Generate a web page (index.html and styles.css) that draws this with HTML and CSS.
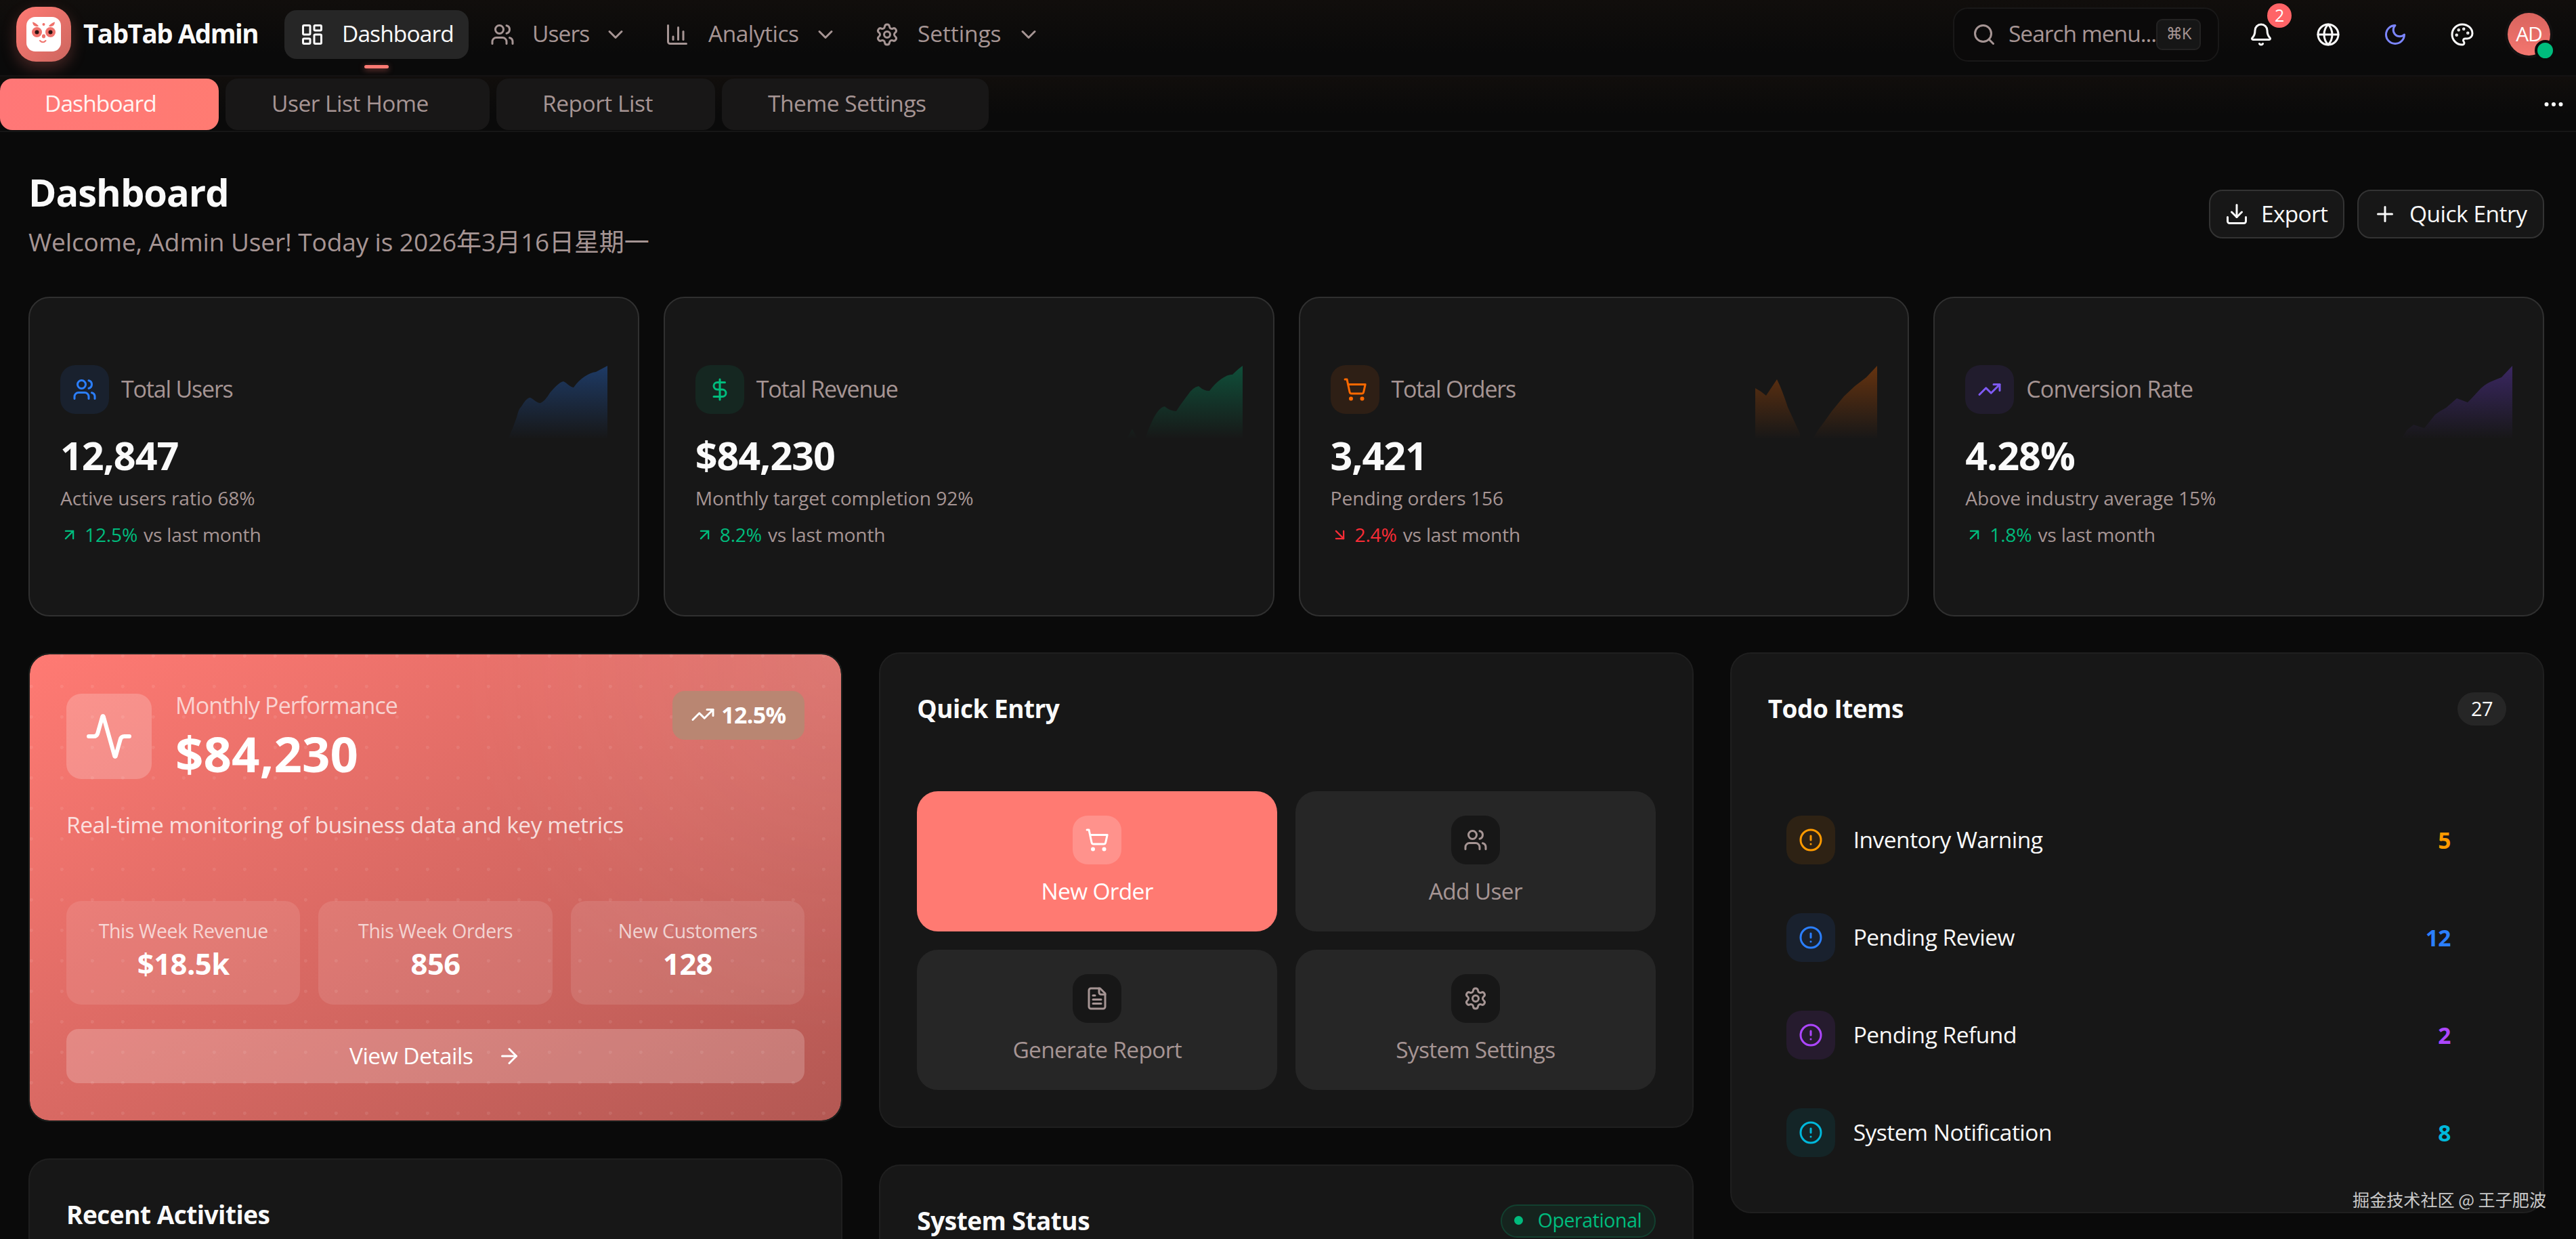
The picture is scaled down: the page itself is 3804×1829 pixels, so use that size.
FILE: index.html
```html
<!DOCTYPE html>
<html lang="en">
<head>
<meta charset="utf-8">
<title>TabTab Admin</title>
<link rel="stylesheet" href="styles.css">
</head>
<body>
<svg class="sprite" aria-hidden="true">
  <symbol id="i-dashboard" viewBox="0 0 24 24"><rect width="7" height="9" x="3" y="3" rx="1"/><rect width="7" height="5" x="14" y="3" rx="1"/><rect width="7" height="9" x="14" y="12" rx="1"/><rect width="7" height="5" x="3" y="16" rx="1"/></symbol>
  <symbol id="i-users" viewBox="0 0 24 24"><path d="M16 21v-2a4 4 0 0 0-4-4H6a4 4 0 0 0-4 4v2"/><path d="M16 3.128a4 4 0 0 1 0 7.744"/><path d="M22 21v-2a4 4 0 0 0-3-3.87"/><circle cx="9" cy="7" r="4"/></symbol>
  <symbol id="i-chart" viewBox="0 0 24 24"><path d="M3 3v16a2 2 0 0 0 2 2h16"/><path d="M18 17V9"/><path d="M13 17V5"/><path d="M8 17v-3"/></symbol>
  <symbol id="i-settings" viewBox="0 0 24 24"><path d="M9.671 4.136a2.34 2.34 0 0 1 4.659 0 2.34 2.34 0 0 0 3.319 1.915 2.34 2.34 0 0 1 2.33 4.033 2.34 2.34 0 0 0 0 3.831 2.34 2.34 0 0 1-2.33 4.033 2.34 2.34 0 0 0-3.319 1.915 2.34 2.34 0 0 1-4.659 0 2.34 2.34 0 0 0-3.32-1.915 2.34 2.34 0 0 1-2.33-4.033 2.34 2.34 0 0 0 0-3.831A2.34 2.34 0 0 1 6.35 6.051a2.34 2.34 0 0 0 3.319-1.915"/><circle cx="12" cy="12" r="3"/></symbol>
  <symbol id="i-chevron" viewBox="0 0 24 24"><path d="m6 9 6 6 6-6"/></symbol>
  <symbol id="i-search" viewBox="0 0 24 24"><path d="m21 21-4.34-4.34"/><circle cx="11" cy="11" r="8"/></symbol>
  <symbol id="i-bell" viewBox="0 0 24 24"><path d="M10.268 21a2 2 0 0 0 3.464 0"/><path d="M3.262 15.326A1 1 0 0 0 4 17h16a1 1 0 0 0 .74-1.673C19.41 13.956 18 12.499 18 8A6 6 0 0 0 6 8c0 4.499-1.411 5.956-2.738 7.326"/></symbol>
  <symbol id="i-globe" viewBox="0 0 24 24"><circle cx="12" cy="12" r="10"/><path d="M12 2a14.5 14.5 0 0 0 0 20 14.5 14.5 0 0 0 0-20"/><path d="M2 12h20"/></symbol>
  <symbol id="i-moon" viewBox="0 0 24 24"><path d="M12 3a6 6 0 0 0 9 9 9 9 0 1 1-9-9Z"/></symbol>
  <symbol id="i-palette" viewBox="0 0 24 24"><path d="M12 22a1 1 0 0 1 0-20 10 9 0 0 1 10 9 5 5 0 0 1-5 5h-2.250a1.750 1.750 0 0 0-1.400 2.800l.3.400a1.750 1.750 0 0 1-1.400 2.800z"/><circle class="dot" cx="13.500" cy="6.500" r=".5"/><circle class="dot" cx="17.500" cy="10.500" r=".5"/><circle class="dot" cx="6.500" cy="12.500" r=".5"/><circle class="dot" cx="8.500" cy="7.500" r=".5"/></symbol>
  <symbol id="i-more" viewBox="0 0 24 24"><circle cx="12" cy="12" r="1"/><circle cx="19" cy="12" r="1"/><circle cx="5" cy="12" r="1"/></symbol>
  <symbol id="i-download" viewBox="0 0 24 24"><path d="M12 15V3"/><path d="M21 15v4a2 2 0 0 1-2 2H5a2 2 0 0 1-2-2v-4"/><path d="m7 10 5 5 5-5"/></symbol>
  <symbol id="i-plus" viewBox="0 0 24 24"><path d="M5 12h14"/><path d="M12 5v14"/></symbol>
  <symbol id="i-dollar" viewBox="0 0 24 24"><path d="M12 2v20"/><path d="M17 5H9.500a3.500 3.500 0 0 0 0 7h5a3.500 3.500 0 0 1 0 7H6"/></symbol>
  <symbol id="i-cart" viewBox="0 0 24 24"><circle cx="8" cy="21" r="1"/><circle cx="19" cy="21" r="1"/><path d="M2.050 2.050h2l2.660 12.420a2 2 0 0 0 2 1.580h9.780a2 2 0 0 0 1.950-1.570l1.650-7.430H5.120"/></symbol>
  <symbol id="i-trend" viewBox="0 0 24 24"><path d="M16 7h6v6"/><path d="m22 7-8.500 8.500-5-5L2 17"/></symbol>
  <symbol id="i-up" viewBox="0 0 24 24"><path d="M7 7h10v10"/><path d="M7 17 17 7"/></symbol>
  <symbol id="i-down" viewBox="0 0 24 24"><path d="m7 7 10 10"/><path d="M17 7v10H7"/></symbol>
  <symbol id="i-activity" viewBox="0 0 24 24"><path d="M22 12h-2.480a2 2 0 0 0-1.930 1.460l-2.350 8.360a.25.25 0 0 1-.48 0L9.240 2.180a.25.25 0 0 0-.48 0l-2.350 8.360A2 2 0 0 1 4.490 12H2"/></symbol>
  <symbol id="i-arrow" viewBox="0 0 24 24"><path d="M5 12h14"/><path d="m12 5 7 7-7 7"/></symbol>
  <symbol id="i-file" viewBox="0 0 24 24"><path d="M15 2H6a2 2 0 0 0-2 2v16a2 2 0 0 0 2 2h12a2 2 0 0 0 2-2V7Z"/><path d="M14 2v4a2 2 0 0 0 2 2h4"/><path d="M10 9H8"/><path d="M16 13H8"/><path d="M16 17H8"/></symbol>
  <symbol id="i-alert" viewBox="0 0 24 24"><circle cx="12" cy="12" r="10"/><path d="M12 8v4"/><path d="M12 16h.01"/></symbol>
</svg>

<header class="topbar">
  <div class="brand">
    <div class="logo">
      <svg class="logo-face" viewBox="0 0 51 51">
        <rect width="51" height="51" rx="13" fill="#fff"/>
        <g fill="#ef726c">
          <path d="M9 7.500C11 8 15 9.500 18 13.500c-1.500 1.500-6 .5-7.500-1.500C9.500 10.500 9.200 9 9 7.500z"/>
          <path d="M42 7.500C40 8 36 9.500 33 13.500c1.500 1.500 6 .5 7.500-1.500 1-1.500 1.300-3 1.500-4.500z"/>
          <circle cx="25.500" cy="11" r="2"/>
          <circle cx="15.500" cy="22.500" r="7.500"/><circle cx="35.500" cy="22.500" r="7.500"/>
          <ellipse cx="25.500" cy="28.500" rx="2.600" ry="3"/>
        </g>
        <circle cx="15.500" cy="22.500" r="3" fill="#2a1512"/><circle cx="35.500" cy="22.500" r="3" fill="#2a1512"/>
        <path d="M20 35q4.500 4.500 8.500 0" fill="none" stroke="#ef726c" stroke-width="2" stroke-linecap="round"/>
      </svg>
    </div>
    <span class="brand-name">TabTab Admin</span>
  </div>
  <nav class="nav">
    <a class="nav-item nav-dashboard active"><svg class="icon"><use href="#i-dashboard"/></svg><span>Dashboard</span></a>
    <a class="nav-item nav-users"><svg class="icon"><use href="#i-users"/></svg><span>Users</span><svg class="icon chev"><use href="#i-chevron"/></svg></a>
    <a class="nav-item nav-analytics"><svg class="icon"><use href="#i-chart"/></svg><span>Analytics</span><svg class="icon chev"><use href="#i-chevron"/></svg></a>
    <a class="nav-item nav-settings"><svg class="icon"><use href="#i-settings"/></svg><span>Settings</span><svg class="icon chev"><use href="#i-chevron"/></svg></a>
  </nav>
  <div class="tools">
    <div class="search"><svg class="icon"><use href="#i-search"/></svg><span class="search-text">Search menu...</span><kbd class="kbd">⌘K</kbd></div>
    <button class="tool"><svg class="icon"><use href="#i-bell"/></svg><span class="count">2</span></button>
    <button class="tool"><svg class="icon"><use href="#i-globe"/></svg></button>
    <button class="tool moon"><svg class="icon"><use href="#i-moon"/></svg></button>
    <button class="tool"><svg class="icon"><use href="#i-palette"/></svg></button>
    <button class="tool"><span class="avatar">AD</span><span class="presence"></span></button>
  </div>
</header>

<div class="tabs">
  <a class="tab tab-1 active">Dashboard</a>
  <a class="tab tab-2">User List Home</a>
  <a class="tab tab-3">Report List</a>
  <a class="tab tab-4">Theme Settings</a>
  <button class="tabs-more"><svg class="icon"><use href="#i-more"/></svg></button>
</div>

<main class="page">
  <div class="page-head">
    <div>
      <h1 class="page-title">Dashboard</h1>
      <p class="page-sub">Welcome, Admin User! Today is 2026年3月16日星期一</p>
    </div>
    <div class="page-actions">
      <button class="btn btn-export"><svg class="icon"><use href="#i-download"/></svg><span>Export</span></button>
      <button class="btn btn-quick"><svg class="icon"><use href="#i-plus"/></svg><span>Quick Entry</span></button>
    </div>
  </div>

  <section class="stats">
    <article class="stat">
      <div>
        <div class="stat-head"><span class="chip blue"><svg class="icon"><use href="#i-users"/></svg></span><span class="stat-title">Total Users</span></div>
        <div class="stat-value">12,847</div>
        <div class="stat-desc">Active users ratio 68%</div>
        <div class="stat-trend"><svg class="icon small up"><use href="#i-up"/></svg><span class="up">12.5%</span><span>vs last month</span></div>
      </div>
      <svg class="spark" viewBox="0 0 180 108">
        <defs><linearGradient id="g1" x1="0" y1="0" x2="0" y2="108" gradientUnits="userSpaceOnUse"><stop offset="0" stop-color="#2b7fff" stop-opacity=".34"/><stop offset="1" stop-color="#2b7fff" stop-opacity="0"/></linearGradient></defs>
        <path fill="url(#g1)" d="M33 108C38 98 42 87 46 76Q49 63 53 60Q60 48 65 47C69 47 75 55 81 55Q88 52 95 40C101 33 109 24 115 23C120 25 124 31 130 32Q137 22 146 16T163 9L180 0V108Z"/>
      </svg>
    </article>
    <article class="stat">
      <div>
        <div class="stat-head"><span class="chip green"><svg class="icon"><use href="#i-dollar"/></svg></span><span class="stat-title">Total Revenue</span></div>
        <div class="stat-value">$84,230</div>
        <div class="stat-desc">Monthly target completion 92%</div>
        <div class="stat-trend"><svg class="icon small up"><use href="#i-up"/></svg><span class="up">8.2%</span><span>vs last month</span></div>
      </div>
      <svg class="spark" viewBox="0 0 180 108">
        <defs><linearGradient id="g2" x1="0" y1="0" x2="0" y2="108" gradientUnits="userSpaceOnUse"><stop offset="0" stop-color="#00bc7d" stop-opacity=".34"/><stop offset="1" stop-color="#00bc7d" stop-opacity="0"/></linearGradient></defs>
        <path fill="url(#g2)" d="M8 108L17 93L25 108ZM36 108Q41 92 48 78Q57 61 65 60Q73 67 82 67Q89 56 99 43Q106 32 115 30Q122 37 131 37Q139 26 149 19T165 13Q174 4 180 0V108Z"/>
      </svg>
    </article>
    <article class="stat">
      <div>
        <div class="stat-head"><span class="chip orange"><svg class="icon"><use href="#i-cart"/></svg></span><span class="stat-title">Total Orders</span></div>
        <div class="stat-value">3,421</div>
        <div class="stat-desc">Pending orders 156</div>
        <div class="stat-trend"><svg class="icon small down"><use href="#i-down"/></svg><span class="down">2.4%</span><span>vs last month</span></div>
      </div>
      <svg class="spark" viewBox="0 0 180 108">
        <defs><linearGradient id="g3" x1="0" y1="0" x2="0" y2="108" gradientUnits="userSpaceOnUse"><stop offset="0" stop-color="#ff6900" stop-opacity=".34"/><stop offset="1" stop-color="#ff6900" stop-opacity="0"/></linearGradient></defs>
        <path fill="url(#g3)" d="M0 33Q8 37 16 44Q24 32 32 20Q40 36 48 61L66 100V108H0ZM85 108Q92 95 98 88L113 67L131 45L147 30L164 17L180 0V108Z"/>
      </svg>
    </article>
    <article class="stat">
      <div>
        <div class="stat-head"><span class="chip violet"><svg class="icon"><use href="#i-trend"/></svg></span><span class="stat-title wide">Conversion Rate</span></div>
        <div class="stat-value">4.28%</div>
        <div class="stat-desc">Above industry average 15%</div>
        <div class="stat-trend"><svg class="icon small up"><use href="#i-up"/></svg><span class="up">1.8%</span><span>vs last month</span></div>
      </div>
      <svg class="spark" viewBox="0 0 180 108">
        <defs><linearGradient id="g4" x1="0" y1="0" x2="0" y2="108" gradientUnits="userSpaceOnUse"><stop offset="0" stop-color="#7f46f5" stop-opacity=".34"/><stop offset="1" stop-color="#7f46f5" stop-opacity="0"/></linearGradient></defs>
        <path fill="url(#g4)" d="M16 108L24 95L34 87L50 92L66 72Q74 66 82 62L98 48L114 54Q122 46 130 37T147 24T164 17L180 0V108Z"/>
      </svg>
    </article>
  </section>

  <section class="columns">
    <div class="col">
      <article class="perf">
        <div class="perf-head">
          <span class="perf-icon"><svg class="icon large"><use href="#i-activity"/></svg></span>
          <div class="perf-text"><div class="perf-label">Monthly Performance</div><div class="perf-value">$84,230</div></div>
          <span class="perf-badge"><svg class="icon"><use href="#i-trend"/></svg>12.5%</span>
        </div>
        <p class="perf-desc">Real-time monitoring of business data and key metrics</p>
        <div class="minis">
          <div class="mini"><span class="mini-label">This Week Revenue</span><span class="mini-value">$18.5k</span></div>
          <div class="mini"><span class="mini-label">This Week Orders</span><span class="mini-value">856</span></div>
          <div class="mini"><span class="mini-label">New Customers</span><span class="mini-value">128</span></div>
        </div>
        <button class="details"><span>View Details</span><svg class="icon"><use href="#i-arrow"/></svg></button>
      </article>
      <article class="card cut recent"><div class="card-head"><h2>Recent Activities</h2></div></article>
    </div>

    <div class="col">
      <article class="card">
        <div class="card-head"><h2>Quick Entry</h2></div>
        <div class="entries">
          <a class="entry primary"><span class="entry-icon"><svg class="icon"><use href="#i-cart"/></svg></span>New Order</a>
          <a class="entry"><span class="entry-icon"><svg class="icon"><use href="#i-users"/></svg></span>Add User</a>
          <a class="entry"><span class="entry-icon"><svg class="icon"><use href="#i-file"/></svg></span>Generate Report</a>
          <a class="entry"><span class="entry-icon"><svg class="icon"><use href="#i-settings"/></svg></span>System Settings</a>
        </div>
      </article>
      <article class="card cut system"><div class="card-head"><h2>System Status</h2><span class="status"><i class="status-dot"></i>Operational</span></div></article>
    </div>

    <div class="col">
      <article class="card">
        <div class="card-head"><h2>Todo Items</h2><span class="total">27</span></div>
        <div class="todos">
          <div class="todo"><span class="chip amber"><svg class="icon"><use href="#i-alert"/></svg></span><span>Inventory Warning</span><b class="num amber-text">5</b></div>
          <div class="todo"><span class="chip blue"><svg class="icon"><use href="#i-alert"/></svg></span><span>Pending Review</span><b class="num blue-text">12</b></div>
          <div class="todo"><span class="chip purple"><svg class="icon"><use href="#i-alert"/></svg></span><span>Pending Refund</span><b class="num purple-text">2</b></div>
          <div class="todo"><span class="chip cyan"><svg class="icon"><use href="#i-alert"/></svg></span><span>System Notification</span><b class="num cyan-text">8</b></div>
        </div>
      </article>
    </div>
  </section>
</main>
<div class="watermark">掘金技术社区 @ 王子肥波</div>
</body>
</html>
```
FILE: styles.css
```css
:root {
  --bg: #0a0a0a;
  --card: #171717;
  --muted-bg: #262626;
  --text: #fafafa;
  --muted: #a69594;
  --primary: #ff7a73;
}
* { box-sizing: border-box; }
body {
  margin: 0;
  width: 3804px;
  height: 1829px;
  overflow: hidden;
  position: relative;
  background: var(--bg);
  color: var(--text);
  font-family: "Open Sans", "Noto Sans CJK SC", sans-serif;
  font-size: 33.5px;
  line-height: 45px;
  letter-spacing: -0.5px;
  white-space: nowrap;
}
h1, h2, p { margin: 0; }
button { font: inherit; letter-spacing: inherit; color: inherit; background: none; border: 0; padding: 0; }
.sprite { position: absolute; width: 0; height: 0; }
.icon { width: 36px; height: 36px; flex: none; fill: none; stroke: currentColor; stroke-width: 2; stroke-linecap: round; stroke-linejoin: round; }
.icon.small { width: 27px; height: 27px; }
.icon.large { width: 72px; height: 72px; }
.dot { fill: currentColor; }

/* top bar */
.topbar {
  height: 113px;
  padding: 10px 29px 20px 24px;
  display: flex;
  align-items: center;
  border-bottom: 2px solid #141212;
  background: linear-gradient(#110e0c, #0a0a0a 70%);
}
.brand { display: flex; align-items: center; width: 396px; gap: 18px; }
.logo {
  width: 81px; height: 81px;
  border-radius: 29px;
  display: grid; place-items: center;
  background: linear-gradient(135deg, #ff7a73, #cc665f);
  box-shadow: 0 9px 22px rgba(255, 122, 115, .25);
}
.logo-face { width: 51px; height: 51px; }
.brand-name { font-size: 38.5px; font-weight: 700; letter-spacing: -1.45px; padding-bottom: 2px; }
.nav { display: flex; gap: 9px; }
.nav-item { position: relative; height: 72px; border-radius: 18px; display: flex; align-items: center; padding: 0 23px; color: var(--muted); }
.nav-item span { margin-left: 26px; padding-bottom: 2px; }
.nav-item .chev { margin-left: auto; }
.nav-dashboard { width: 272px; letter-spacing: -0.9px; }
.nav-users { width: 249px; letter-spacing: -0.9px; }
.nav-analytics { width: 301px; }
.nav-analytics span { margin-left: 28px; }
.nav-settings { width: 291px; letter-spacing: -0.1px; }
.nav-settings span { margin-left: 27px; }
.nav-item.active { background: var(--muted-bg); color: var(--text); }
.nav-item.active::after {
  content: ""; position: absolute; left: 118px; top: 81px; width: 36px; height: 5px;
  border-radius: 3px; background: var(--primary); box-shadow: 0 2px 9px rgba(255, 122, 115, .5);
}
.tools { margin-left: auto; display: flex; align-items: center; gap: 18px; }
.search {
  width: 393px; height: 80px; margin-right: 3px; padding: 0 26px 0 26px;
  display: flex; align-items: center;
  border: 2px solid #191818; border-radius: 22px; background: #0b0a0a; color: var(--muted);
}
.search-text { margin-left: 18px; width: 218px; padding-bottom: 3px; letter-spacing: -1px; }
.kbd {
  width: 66px; height: 46px; flex: none; display: grid; place-items: center; padding-bottom: 3px;
  border: 2px solid #232222; border-radius: 9px; background: #161616;
  font: 24px/30px "Open Sans", "DejaVu Sans", sans-serif; letter-spacing: -1px; color: var(--muted);
}
.tool { position: relative; width: 81px; height: 81px; display: grid; place-items: center; }
.moon { color: #7c86ff; }
.count {
  position: absolute; left: 50px; top: -5px; width: 36px; height: 36px; border-radius: 50%;
  background: #ff6467; color: #fff; font-size: 25px; line-height: 35px; text-align: center;
}
.avatar {
  width: 63px; height: 63px; border-radius: 50%; box-shadow: 0 0 0 4px #131111;
  background: linear-gradient(#d9645e, #f4766f); color: #fff; font-size: 30px; line-height: 61px; text-align: center; letter-spacing: -1px;
}
.presence { position: absolute; left: 49px; top: 49px; width: 31px; height: 31px; border-radius: 50%; border: 4px solid #0a0a0a; background: #00bc7d; }

/* tab strip */
.tabs {
  height: 82px; padding: 3px 0 1px; display: flex; gap: 10px;
  border-bottom: 2px solid #161616;
  background: linear-gradient(#110e0c, #0a0a0a 70%);
}
.tab { height: 76px; border-radius: 18px; background: #181717; color: var(--muted); line-height: 72px; }
.tab.active { background: linear-gradient(100deg, #ff7777, #ff7b72); color: #fff4f2; }
.tab-1 { width: 323px; padding-left: 66px; letter-spacing: -0.9px; }
.tab-2 { width: 390px; padding-left: 68px; }
.tab-3 { width: 323px; padding-left: 68px; }
.tab-4 { width: 394px; padding-left: 68px; }
.tabs-more { margin-left: auto; margin-right: 15px; display: grid; place-items: center; color: #fff; }

/* page */
.page { padding: 52px 47px 0 42px; }
.page-head { display: flex; align-items: center; justify-content: space-between; height: 137px; }
.page-title { font-size: 56px; line-height: 72px; font-weight: 700; letter-spacing: -1px; }
.page-sub { margin-top: 11px; font-size: 37px; line-height: 54px; letter-spacing: -0.1px; color: var(--muted); }
.page-actions { display: flex; gap: 19px; }
.btn { height: 72px; border: 2px solid #333; border-radius: 20px; background: var(--card); display: flex; align-items: center; }
.btn span { padding-bottom: 1px; }
.btn-export { width: 200px; padding-left: 21px; gap: 18px; letter-spacing: -0.7px; }
.btn-quick { width: 276px; padding-left: 21px; gap: 18px; }

.stats { margin-top: 54px; display: grid; grid-template-columns: repeat(4, 1fr); gap: 36px; }
.stat {
  height: 472px; padding: 99px 45px 0; display: flex; justify-content: space-between; align-items: flex-start;
  border: 2px solid #303030; border-radius: 31px; background: var(--card); color: var(--muted);
}
.stat-head { display: flex; align-items: center; gap: 18px; }
.stat-title { padding-bottom: 2px; font-size: 34px; letter-spacing: -1.2px; }
.stat-title.wide { letter-spacing: -0.85px; }
.stat-value { margin-top: 25px; font-size: 57.5px; line-height: 72px; font-weight: 700; letter-spacing: -1.1px; color: var(--text); }
.stat-desc { margin-top: 9px; font-size: 28.2px; line-height: 36px; letter-spacing: -0.05px; }
.stat-trend { margin-top: 18px; display: flex; align-items: center; gap: 9px; font-size: 28.2px; line-height: 36px; letter-spacing: -0.2px; }
.up { color: #00bc7d; }
.down { color: #fb2c36; }
.spark { width: 180px; height: 108px; margin-top: 1px; }

.chip { width: 72px; height: 72px; border-radius: 22px; display: grid; place-items: center; flex: none; }
.blue { background: #19212e; color: #2b7fff; }
.stat-trend .up { background: none; }
.green { background: #152721; color: #00bc7d; }
.orange { background: #2e1f15; color: #ff6900; }
.violet { background: #211c2d; color: #7f5af5; }
.amber { background: #2e2214; color: #fe9a00; }
.purple { background: #261b2e; color: #ad46ff; }
.cyan { background: #142527; color: #00b8db; }

.columns { margin-top: 53px; display: grid; grid-template-columns: repeat(3, 1fr); gap: 54px; align-items: start; }
.card { padding: 54px; border: 2px solid #1f1f1f; border-radius: 31px; background: var(--card); }
.card + .card, .perf + .card { margin-top: 54px; }
.cut { padding-bottom: 0; border-bottom: 0; border-radius: 31px 31px 0 0; }
.recent { height: 119px; }
.system { height: 110px; }
.card-head { display: flex; align-items: center; justify-content: space-between; height: 54px; }
.card-head h2 { font-size: 37px; line-height: 54px; font-weight: 700; letter-spacing: -0.5px; }

.perf {
  margin-top: 1px; height: 692px; padding: 54px; border: 2px solid #1b1e1c; border-radius: 31px; color: #fff;
  background:
    radial-gradient(circle at 2.25px 2.25px, rgba(255, 255, 255, .08) 2.25px, transparent 2.8px) 0 0 / 45px 45px padding-box,
    radial-gradient(circle at 100% 0, rgba(255, 255, 255, .1), transparent 560px) padding-box,
    linear-gradient(to bottom right, #ff7a73, #b35853) padding-box;
}
.perf-head { display: flex; align-items: flex-start; height: 133px; }
.perf-icon { width: 126px; height: 126px; margin: 4px 35px 0 0; border-radius: 22px; display: grid; place-items: center; background: rgba(255, 255, 255, .2); }
.perf-label { margin-top: -1px; font-size: 34px; letter-spacing: -0.9px; color: rgba(255, 255, 255, .7); }
.perf-value { margin-top: 8px; font-size: 72.5px; line-height: 81px; font-weight: 700; letter-spacing: 0.1px; }
.perf-badge {
  margin-left: auto; width: 195px; height: 72px; border-radius: 18px; display: flex; align-items: center; padding: 0 0 2px 27px; gap: 9px;
  background: #b98672; font-weight: 700; font-size: 34px; letter-spacing: -0.7px;
}
.perf-desc { margin-top: 37px; line-height: 54px; letter-spacing: -0.48px; color: rgba(255, 255, 255, .8); }
.minis { margin-top: 86px; display: grid; grid-template-columns: repeat(3, 1fr); gap: 27px; }
.mini { height: 153px; padding-top: 26px; border-radius: 22px; background: rgba(255, 255, 255, .1); display: flex; flex-direction: column; align-items: center; }
.mini-label { font-size: 28.5px; line-height: 36px; letter-spacing: -0.4px; color: rgba(255, 255, 255, .7); }
.mini-value { margin-top: 6px; font-size: 43.5px; line-height: 50px; font-weight: 700; }
.details { margin-top: 36px; width: 100%; height: 80px; border-radius: 18px; background: rgba(255, 255, 255, .2); display: flex; align-items: center; justify-content: center; gap: 36px; padding-bottom: 1px; }

.entries { margin-top: 95px; display: grid; grid-template-columns: 1fr 1fr; gap: 27px; }
.entry { height: 207px; padding-top: 36px; border-radius: 31px; background: var(--muted-bg); color: var(--muted); display: flex; flex-direction: column; align-items: center; gap: 17px; letter-spacing: -0.7px; }
.entry-icon { width: 72px; height: 72px; border-radius: 22px; display: grid; place-items: center; background: var(--card); }
.entry.primary { background: #ff7a72; color: #fff; }
.primary .entry-icon { background: #ff928c; }
.status {
  width: 229px; height: 49px; border: 2px solid #12402f; border-radius: 25px; background: #15241e; color: #00bc7d;
  display: flex; align-items: center; gap: 22px; padding: 0 0 2px 18px; font-size: 28.5px; letter-spacing: -0.4px;
}
.status-dot { width: 13px; height: 13px; border-radius: 50%; background: #00bc7d; }
.total { width: 72px; height: 49px; border-radius: 25px; background: var(--muted-bg); text-align: center; font-size: 29px; line-height: 47px; }
.todos { margin-top: 104px; display: flex; flex-direction: column; gap: 18px; }
.todo { height: 126px; padding: 0 82px 0 27px; display: flex; align-items: center; gap: 27px; }
.todo span { padding-bottom: 1px; }
.todo .chip { padding-bottom: 0; }
.num { margin-left: auto; font-weight: 700; }
.amber-text { color: #fe9a00; }
.blue-text { color: #2b7fff; }
.purple-text { color: #ad46ff; }
.cyan-text { color: #00b8db; }

.watermark { position: absolute; right: 44px; top: 1752px; font: 25.1px/36px "Noto Sans CJK SC", sans-serif; letter-spacing: 0; color: #c9c9c9; }
```
